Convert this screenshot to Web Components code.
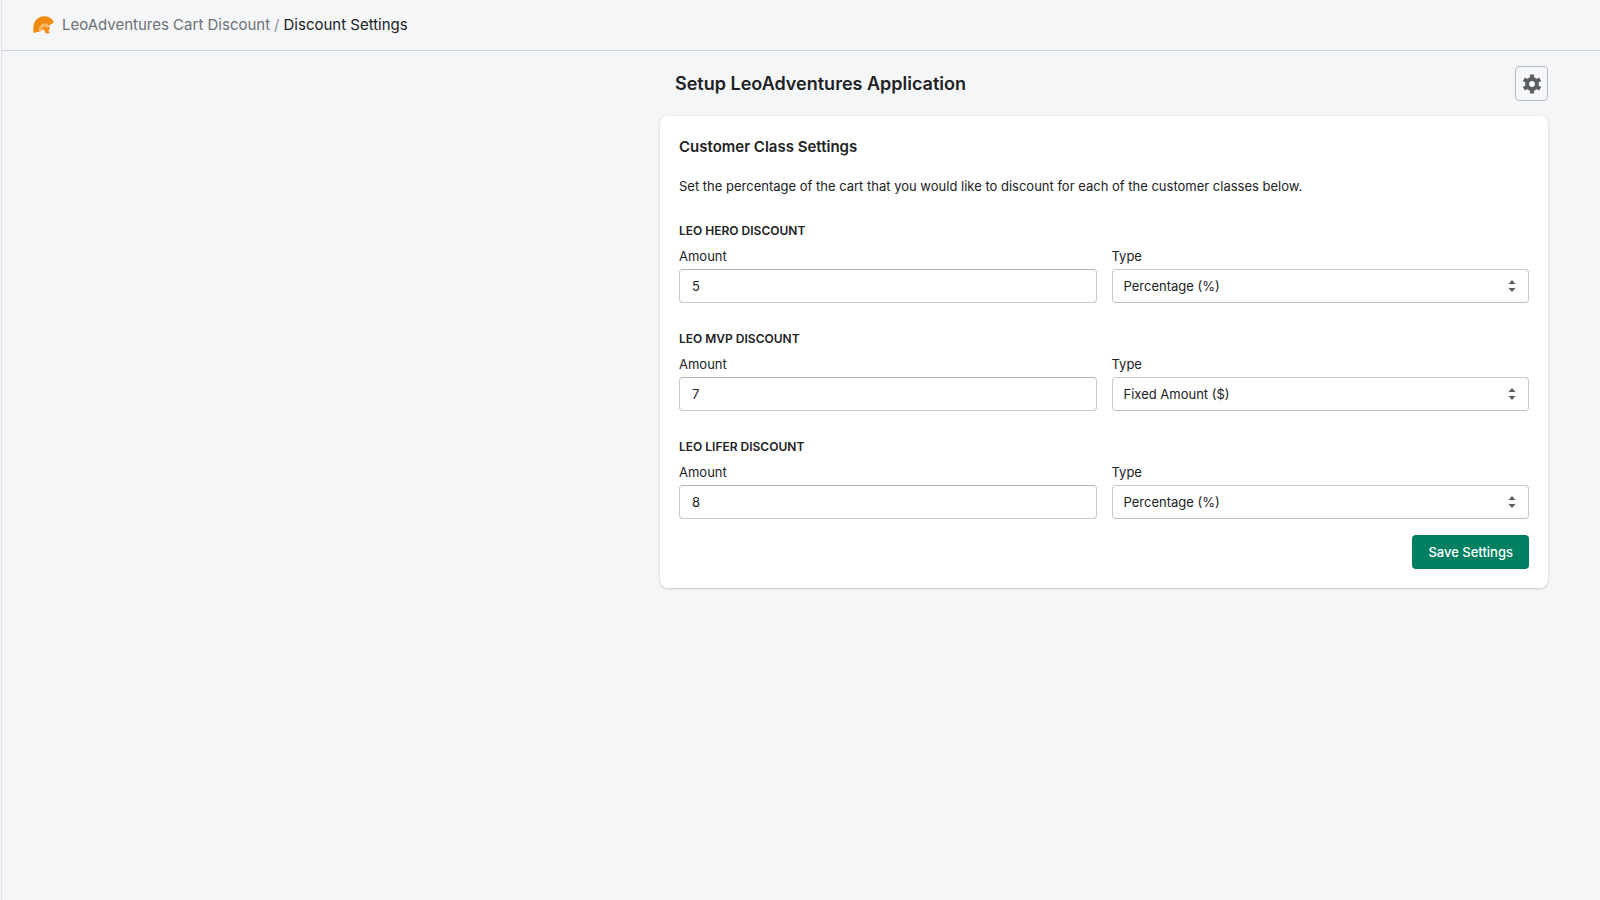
<!DOCTYPE html>
<html lang="en">
<head>
<meta charset="utf-8">
<meta name="viewport" content="width=device-width, initial-scale=1">
<title>Discount Settings</title>
<style>
body { margin: 0; background: #f5f6f8; color: #202223; font: 13px/20px Inter, "Liberation Sans", sans-serif; }
</style>
</head>
<body>
<app-frame>
  <app-breadcrumb slot="header" app="LeoAdventures Cart Discount" page="Discount Settings"></app-breadcrumb>
  <settings-page heading="Setup LeoAdventures Application">
    <settings-card heading="Customer Class Settings">
      <span slot="intro">Set the percentage of the cart that you would like to discount for each of the customer classes below.</span>
      <discount-row heading="Leo Hero Discount" amount="5" type="percentage"></discount-row>
      <discount-row heading="Leo MVP Discount" amount="7" type="fixed"></discount-row>
      <discount-row heading="Leo Lifer Discount" amount="8" type="percentage"></discount-row>
      <primary-button slot="actions">Save Settings</primary-button>
    </settings-card>
  </settings-page>
</app-frame>
<script>
const define = (name, render) => customElements.define(name, class extends HTMLElement {
  constructor() {
    super();
    this.attachShadow({ mode: "open" });
  }
  connectedCallback() {
    this.shadowRoot.innerHTML = render(this);
  }
});

define("app-frame", () => `
<style>
  :host { display: block; box-sizing: border-box; min-height: 100vh; border-left: 1px solid #e3e4e8; margin-left: 1px; }
  header { display: flex; align-items: center; height: 50px; padding: 0 31px; border-bottom: 1px solid #cfd1d8; }
</style>
<header><slot name="header"></slot></header>
<main><slot></slot></main>`);

define("app-breadcrumb", el => `
<style>
  :host { display: block; }
  nav { display: flex; align-items: center; font-size: 15px; line-height: 20px; color: #202223; }
  svg { width: 21px; height: 18px; margin-right: 8px; }
  a { color: #6d7175; text-decoration: none; }
  i { font-style: normal; color: #8c9196; margin: 0 4px; }
</style>
<nav aria-label="Breadcrumb">
  <svg viewBox="0 0 21 18" aria-hidden="true">
    <path fill="#f18a10" d="M.6 17C-1.200 7 3.800 .3 11 .3c4.600 0 8 2 9.800 5.900l-4.300 3.400-1.700.6-9.400 5.600z"/>
    <path fill="#f9b866" d="M5.600 16.300C5.300 9.800 9.300 6.400 14.200 7.800l2.500 1.900-2.500 1.600-2.400-.6c-2.400.5-3.300 2.300-3.200 4.400z"/>
    <path fill="#f18a10" d="M8.600 12.500c1.500-2.200 3.700-2.300 5.600-.9l2-1 .6 2.400-1.400 1.300 1.300 2.900h-4.200C12.300 15 11.200 13.500 8.600 12.500z"/>
  </svg>
  <a href="#">${el.getAttribute("app")}</a><i>/</i><span aria-current="page">${el.getAttribute("page")}</span>
</nav>`);

define("settings-page", el => `
<style>
  :host { display: block; max-width: 888px; margin: 0 52px 0 auto; padding-top: 15px; }
  .bar { display: flex; align-items: center; justify-content: space-between; padding-left: 15px; margin-bottom: 15px; }
  h1 { margin: 0; font-size: 18px; line-height: 28px; font-weight: 600; }
  button { display: flex; align-items: center; justify-content: center; box-sizing: border-box; width: 33px; height: 35px; padding: 0; border: 1px solid #babec3; border-radius: 4px; background: #f6f7f9; color: #5c5f62; }
  svg { width: 20px; height: 20px; }
</style>
<div class="bar">
  <h1>${el.getAttribute("heading")}</h1>
  <button type="button" aria-label="Settings">
    <svg viewBox="0 0 20 20" fill="none" stroke="currentColor" aria-hidden="true">
      <circle cx="10" cy="10" r="4.900" stroke-width="4"/>
      <path stroke-width="4.200" stroke-linecap="butt" d="M10 4V.600M10 16v3.400M4.800 7 1.900 5.300M15.200 13l2.900 1.700M4.800 13l-2.900 1.700M15.200 7l2.900-1.700"/>
    </svg>
  </button>
</div>
<slot></slot>`);

define("settings-card", el => `
<style>
  :host { display: block; padding: 19px; border-radius: 8px; background: #fff; box-shadow: 0 0 4px rgba(23,24,24,.06), 0 1px 2px rgba(0,0,0,.15); }
  h2 { margin: 0 0 17px; font-size: 15px; line-height: 24px; font-weight: 600; }
  p { margin: 0; }
  .rows { display: grid; gap: 28px; margin-top: 27px; }
  .actions { display: flex; justify-content: flex-end; margin-top: 16px; }
</style>
<h2>${el.getAttribute("heading")}</h2>
<p><slot name="intro"></slot></p>
<div class="rows"><slot></slot></div>
<div class="actions"><slot name="actions"></slot></div>`);

define("discount-row", el => {
  const fixed = el.getAttribute("type") === "fixed";
  return `
<style>
  :host { display: block; }
  h3 { margin: 0 0 7px; font-size: 12px; line-height: 16px; font-weight: 600; text-transform: uppercase; }
  .fields { display: grid; grid-template-columns: 1fr 1fr; gap: 15px; }
  label { display: block; margin-bottom: 3px; }
  input, select { display: block; box-sizing: border-box; width: 100%; height: 34px; margin: 0; padding: 0 12px; border: 1px solid #c9cccf; border-radius: 4px; background: #fff; color: inherit; font: inherit; appearance: none; }
  input { border-top-color: #aeb4b9; }
  select { padding: 0 11px; border-bottom-color: #babfc3; }
  .control { display: grid; align-items: center; }
  .control > * { grid-area: 1 / 1; }
  svg { justify-self: end; width: 8px; height: 12px; margin-right: 13px; fill: #5c5f62; pointer-events: none; }
</style>
<h3>${el.getAttribute("heading")}</h3>
<div class="fields">
  <div><label for="amount">Amount</label><input id="amount" type="text" inputmode="decimal" value="${el.getAttribute("amount")}"></div>
  <div><label for="type">Type</label>
    <div class="control">
      <select id="type">
        <option${fixed ? "" : " selected"}>Percentage (%)</option>
        <option${fixed ? " selected" : ""}>Fixed Amount ($)</option>
      </select>
      <svg viewBox="0 0 8 12" aria-hidden="true"><path d="M4 0 7.600 4H.4zM4 12 .4 8h7.200z"/></svg>
    </div>
  </div>
</div>`;
});

define("primary-button", () => `
<style>
  :host { display: block; }
  button { display: block; height: 34px; padding: 0 16px; border: 0; border-radius: 4px; background: #008060; color: #fff; font: inherit; font-weight: 500; }
</style>
<button type="button"><slot></slot></button>`);
</script>
</body>
</html>
